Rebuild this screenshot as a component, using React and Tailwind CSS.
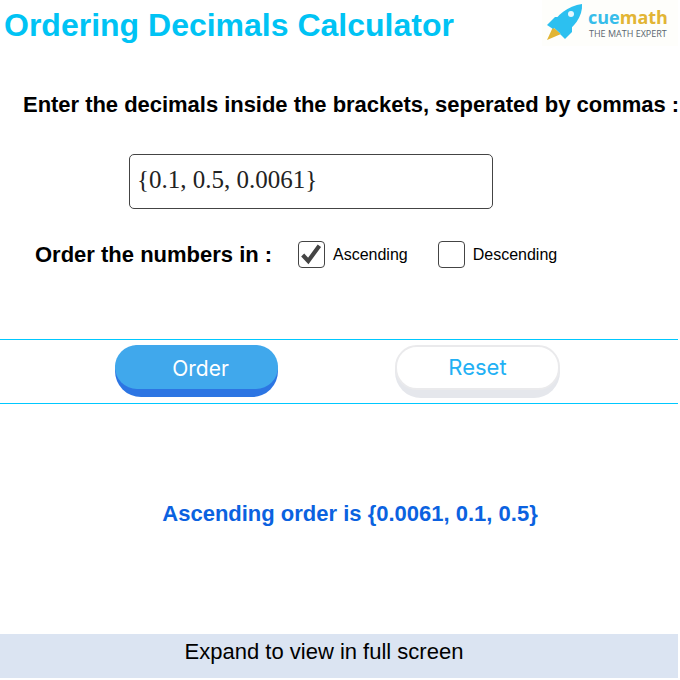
import React from 'react';

function Logo() {
  return (
    <div className="relative w-[136px] h-[46px] shrink-0 bg-[#fefefb]">
      <svg viewBox="0 0 44 44" className="absolute left-[2px] top-0 w-[44px] h-[44px]">
        <path d="M3 40 L9 27 L17 34 Z" fill="#e2b534" />
        <path d="M3 25 L11 17 L18 17 L9 29 Z" fill="#2cc0f0" />
        <path d="M21 39 L28 32 L28 24 L16 34 Z" fill="#2cc0f0" />
        <path d="M8 26 C12 15 24 6 38 4 C39 16 30 28 18 35 Z" fill="#2cc0f0" />
        <circle cx="27" cy="14" r="3" fill="#e6f8ff" />
      </svg>
      <div className="absolute left-[46px] top-[7px] text-[18px] leading-[20px] font-bold font-['Open_Sans',sans-serif]">
        <span className="text-[#37bdea]">cue</span>
        <span className="text-[#e2b534]">math</span>
      </div>
      <div className="absolute left-[47px] top-[28px] text-[9px] leading-[12px] font-medium text-[#5b6670] font-['Open_Sans',sans-serif] whitespace-nowrap">
        THE MATH EXPERT
      </div>
    </div>
  );
}

function Option({ label, checked }) {
  return (
    <div className="flex items-center gap-[8px]">
      <div className="w-[27px] h-[27px] border border-[#444] rounded-[4px] bg-white">
        {checked && (
          <svg viewBox="0 0 27 27" className="w-[25px] h-[25px]">
            <path d="M4 14 L10 20.5 L22 4" fill="none" stroke="#444" strokeWidth="4.5" />
          </svg>
        )}
      </div>
      <span className="text-[16px] leading-[30px] pt-[1px] text-black">{label}</span>
    </div>
  );
}

export default function App() {
  return (
    <div className="w-[678px] h-[678px] bg-white flex flex-col font-['Liberation_Sans',Arial,sans-serif] overflow-hidden">
      <div className="h-[50px] flex justify-between items-start">
        <h1 className="pl-[4px] pt-[4px] text-[32px] leading-[42px] font-bold text-[#00c3f4] whitespace-nowrap">
          Ordering Decimals Calculator
        </h1>
        <Logo />
      </div>

      <p className="mt-[41px] pl-[23px] text-[22px] leading-[28px] font-bold text-black whitespace-nowrap tracking-[-0.03px]">
        Enter the decimals inside the brackets, seperated by commas :
      </p>

      <div className="mt-[35px] ml-[129px] w-[364px] h-[55px] border border-[#444] rounded-[5px] flex items-center pl-[7px] pb-[4px] text-[25px] font-['Liberation_Serif',serif] text-[#222]">
        {'{0.1, 0.5, 0.0061}'}
      </div>

      <div className="mt-[31px] pl-[35px] flex items-center h-[28px]">
        <span className="text-[22px] font-bold text-black w-[263px] whitespace-nowrap">Order the numbers in :</span>
        <Option label="Ascending" checked />
        <div className="w-[30px]" />
        <Option label="Descending" />
      </div>

      <div className="mt-[71px] h-[65px] border-y border-[#00c8ff] flex">
        <button className="mt-[5px] ml-[115px] w-[163px] h-[52px] rounded-[26px] bg-[#2c75e3] relative">
          <span className="absolute inset-x-0 top-0 h-[44px] pl-[8px] rounded-[22px] bg-[#40a8ec] text-white text-[21px] leading-[47px] font-['Inter',sans-serif] font-normal">Order</span>
        </button>
        <button className="mt-[5px] ml-[117px] w-[165px] h-[53px] rounded-[26px] bg-[#e5e7ec] relative">
          <span className="absolute inset-x-0 top-0 h-[45px] rounded-[22px] bg-white border-2 border-[#eaeaec] text-[#22b0f4] text-[22px] leading-[41px] font-['Inter',sans-serif] font-normal">Reset</span>
        </button>
      </div>

      <p className="mt-[96px] pl-[22px] text-center text-[22px] leading-[28px] font-bold text-[#0b62e0]">
        Ascending order is {'{0.0061, 0.1, 0.5}'}
      </p>

      <div className="mt-auto h-[44px] pr-[30px] bg-[#dbe4f2] text-center text-[22px] leading-[36px] text-black">
        Expand to view in full screen
      </div>
    </div>
  );
}
